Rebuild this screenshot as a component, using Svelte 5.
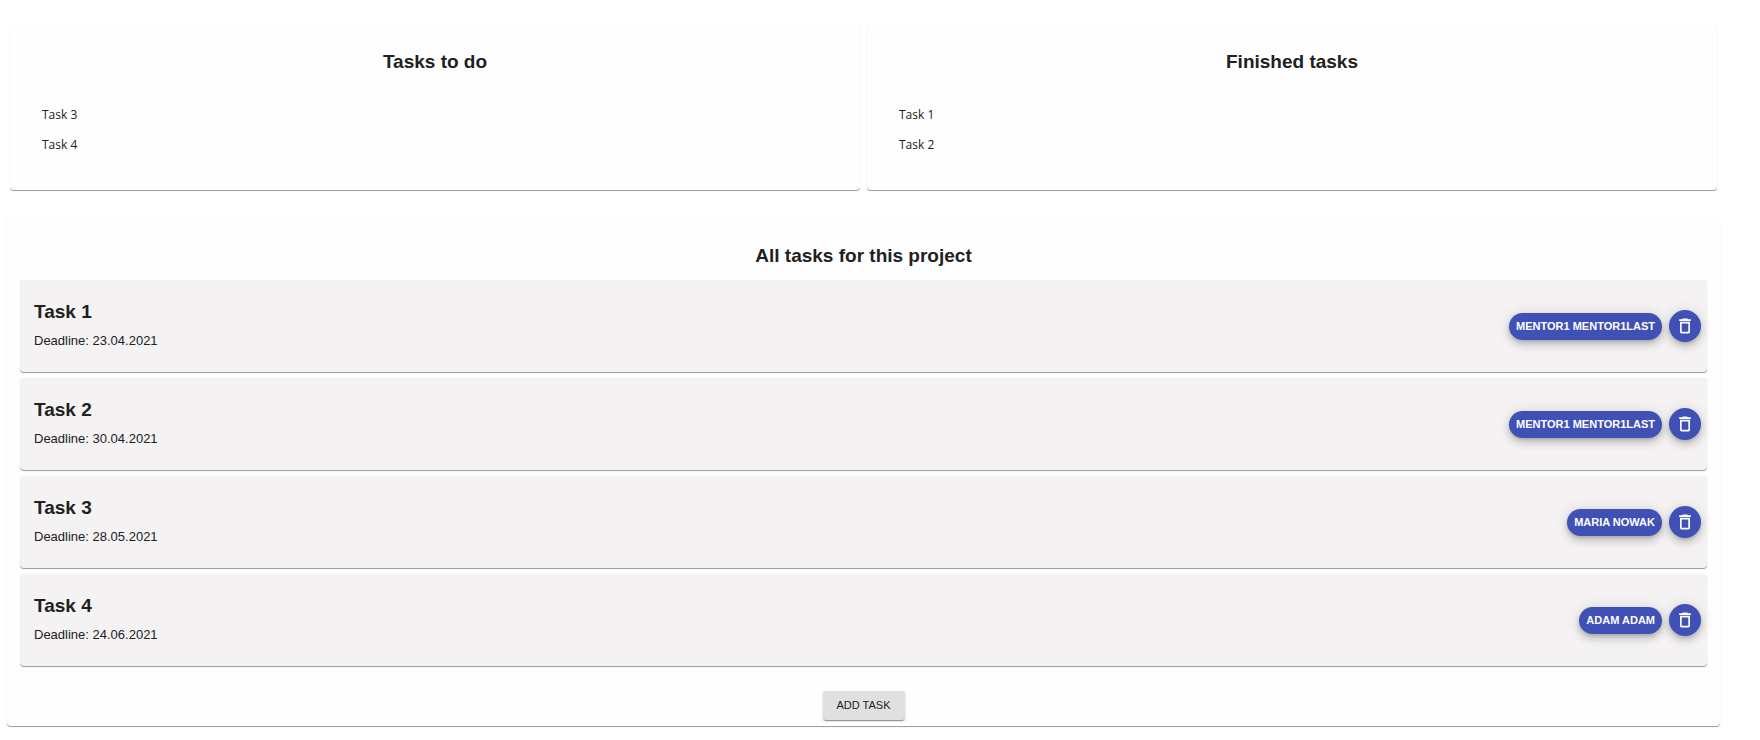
<script>
  const groups = [
    { title: 'Tasks to do', items: ['Task 3', 'Task 4'] },
    { title: 'Finished tasks', items: ['Task 1', 'Task 2'] }
  ];

  const tasks = [
    { name: 'Task 1', deadline: '23.04.2021', person: 'MENTOR1 MENTOR1LAST' },
    { name: 'Task 2', deadline: '30.04.2021', person: 'MENTOR1 MENTOR1LAST' },
    { name: 'Task 3', deadline: '28.05.2021', person: 'MARIA NOWAK' },
    { name: 'Task 4', deadline: '24.06.2021', person: 'ADAM ADAM' }
  ];
</script>

<main>
  <div class="summary">
    {#each groups as group}
      <section class="paper group">
        <h3>{group.title}</h3>
        <ul class="names">
          {#each group.items as item}
            <li>{item}</li>
          {/each}
        </ul>
      </section>
    {/each}
  </div>

  <section class="paper all">
    <h3>All tasks for this project</h3>
    <ul class="tasks">
      {#each tasks as task}
        <li class="paper task">
          <div class="info">
            <h3>{task.name}</h3>
            <p>Deadline: {task.deadline}</p>
          </div>
          <button type="button" class="fab person">{task.person}</button>
          <button type="button" class="fab delete" aria-label="Delete {task.name}">
            <svg viewBox="0 0 24 24" aria-hidden="true">
              <path d="M6 19c0 1.1.9 2 2 2h8c1.1 0 2-.9 2-2V7H6v12zM8 9h8v10H8V9zm7.5-5l-1-1h-5l-1 1H5v2h14V4z" />
            </svg>
          </button>
        </li>
      {/each}
    </ul>
    <button type="button" class="add">ADD TASK</button>
  </section>
</main>

<style>
  :global(body) {
    margin: 0;
    background: #fff;
    color: #212121;
    font-family: "Liberation Sans", Arial, sans-serif;
  }

  main {
    padding: 25px 40px 12px 7px;
  }

  h3,
  p,
  ul {
    margin: 0;
    padding: 0;
  }

  ul {
    list-style: none;
  }

  h3 {
    font-size: 19px;
    line-height: 24px;
    font-weight: 700;
  }

  button {
    border: 0;
    font-family: inherit;
    font-size: 11px;
    line-height: 16px;
    cursor: pointer;
  }

  .paper {
    box-sizing: border-box;
    border-radius: 4px;
    background: #fefefe;
    box-shadow: 0 1px 0 #a0a0a2, 0 1px 2px rgba(0, 0, 0, 0.1);
  }

  .summary {
    display: grid;
    grid-template-columns: 1fr 1fr;
    gap: 7px;
    padding: 0 3px;
  }

  .group {
    padding: 25px 32px 30px;
  }

  .group h3,
  .all > h3 {
    text-align: center;
  }

  .names {
    margin-top: 26px;
    font-family: "Open Sans", "Noto Sans", sans-serif;
    font-size: 12px;
    line-height: 30px;
  }

  .all {
    display: flex;
    flex-direction: column;
    margin-top: 29px;
    padding: 25px 13px 6px;
  }

  .tasks {
    display: flex;
    flex-direction: column;
    gap: 6px;
    margin-top: 12px;
  }

  .task {
    display: flex;
    align-items: center;
    gap: 7px;
    padding: 20px 6px 20px 14px;
    background: #f4f2f3;
  }

  .info {
    flex: 1;
  }

  .info p {
    margin-top: 9px;
    padding-bottom: 3px;
    font-size: 13px;
    line-height: 16px;
  }

  .fab {
    background: #3f51b5;
    color: #fff;
    font-weight: 700;
    box-shadow: 0 2px 4px -1px rgba(0, 0, 0, 0.2), 0 5px 8px rgba(0, 0, 0, 0.14), 0 1px 14px rgba(0, 0, 0, 0.12);
  }

  .person {
    height: 27px;
    padding: 0 7px 1px;
    border-radius: 14px;
  }

  .delete {
    display: flex;
    align-items: center;
    justify-content: center;
    width: 32px;
    height: 32px;
    padding: 0;
    border-radius: 50%;
  }

  .delete svg {
    width: 20px;
    height: 20px;
    fill: currentColor;
  }

  .add {
    align-self: center;
    margin-top: 25px;
    padding: 6px 14px 7px;
    border-radius: 3px;
    background: #e0e0e0;
    color: #212121;
    box-shadow: 0 2px 1px -1px rgba(0, 0, 0, 0.3), 0 1px 2px rgba(0, 0, 0, 0.25);
  }
</style>
